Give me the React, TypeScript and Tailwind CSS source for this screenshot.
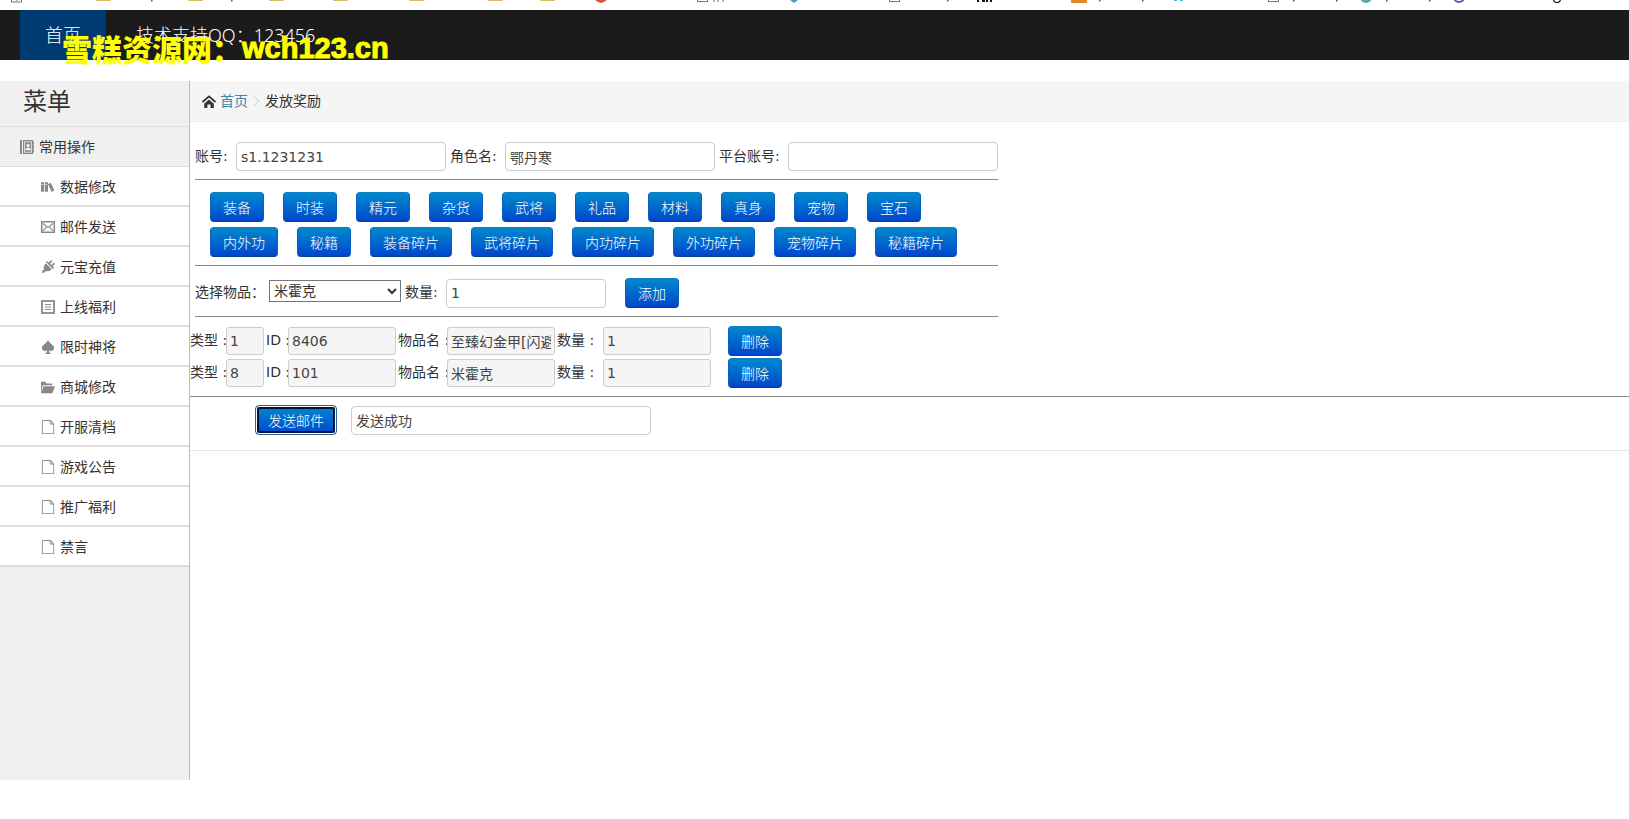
import React from "react";
import { ImBooks, ImPowerCord, ImSpades, ImFolderOpen, ImFileEmpty } from "react-icons/im";

const sans = "font-['DejaVu_Sans','Noto_Sans_CJK_SC',sans-serif]";

function MailIcon() {
  return (
    <svg viewBox="0 0 14 12" width="14" height="12" fill="none" stroke="currentColor" aria-hidden="true">
      <rect x="0.75" y="0.75" width="12.5" height="10.5" strokeWidth="1.5" />
      <path d="M2 2.5l5 4 5-4M2 9.8l3.2-3.6M12 9.8L8.8 6.2" strokeWidth="1.1" />
    </svg>
  );
}

function ListIcon() {
  return (
    <svg viewBox="0 0 14 14" width="14" height="14" fill="none" stroke="currentColor" aria-hidden="true">
      <rect x="1" y="1" width="12" height="12" strokeWidth="1.8" />
      <path d="M4 4.5h6M4 7h6M4 9.5h6" strokeWidth="1.1" />
    </svg>
  );
}

function ContactsIcon() {
  return (
    <svg viewBox="0 0 14 14" width="14" height="14" aria-hidden="true">
      <path d="M0 0h2v14H0zM3 0h10v14H3z" fill="#888" />
      <path d="M13 1.5h1v3h-1zM13 5.5h1v3h-1zM13 9.5h1v3h-1z" fill="#888" />
      <rect x="4.6" y="1.8" width="7" height="10.4" fill="none" stroke="#eee" strokeWidth="0.8" />
      <circle cx="8.1" cy="5.4" r="1.7" fill="#f0f0f0" />
      <path d="M5.3 10.3c0-2 1.2-2.9 2.8-2.9s2.8.9 2.8 2.9z" fill="#f0f0f0" />
    </svg>
  );
}

function HomeIcon() {
  return (
    <svg viewBox="0 0 14 13" width="14" height="13" className="mr-1" aria-hidden="true">
      <path d="M0.5 7L7 1.4 13.5 7" fill="none" stroke="#333" strokeWidth="1.9" />
      <path d="M7 4.6l4.8 4.2V13H8.6V9.6H5.4V13H2.2V8.8z" fill="#333" />
    </svg>
  );
}

const menu: { label: string; icon: React.ReactNode }[] = [
  { label: "数据修改", icon: <ImBooks /> },
  { label: "邮件发送", icon: <MailIcon /> },
  { label: "元宝充值", icon: <ImPowerCord /> },
  { label: "上线福利", icon: <ListIcon /> },
  { label: "限时神将", icon: <ImSpades /> },
  { label: "商城修改", icon: <ImFolderOpen /> },
  { label: "开服清档", icon: <ImFileEmpty /> },
  { label: "游戏公告", icon: <ImFileEmpty /> },
  { label: "推广福利", icon: <ImFileEmpty /> },
  { label: "禁言", icon: <ImFileEmpty /> },
];

const categories = [
  ["装备", "时装", "精元", "杂货", "武将", "礼品", "材料", "真身", "宠物", "宝石"],
  ["内外功", "秘籍", "装备碎片", "武将碎片", "内功碎片", "外功碎片", "宠物碎片", "秘籍碎片"],
];

const rows = [
  { type: "1", id: "8406", name: "至臻幻金甲[闪避]", count: "1" },
  { type: "8", id: "101", name: "米霍克", count: "1" },
];

function Button({ children, className = "" }: { children: React.ReactNode; className?: string }) {
  return (
    <button
      type="button"
      className={`h-[30px] shrink-0 rounded border border-t-[#0a7cc4] border-x-[#0a5fc0] border-b-[#0b3f9c] bg-linear-to-b from-[#0088cc] to-[#0044cc] px-3 pt-0.5 text-sm font-light text-white ${className}`}
    >
      {children}
    </button>
  );
}

const label = "shrink-0 whitespace-nowrap pb-0.5";
const box = "h-[29px] min-w-0 rounded border border-[#ccc] bg-white px-1 text-sm text-[#444] outline-none";
const flat = "h-[28px] min-w-0 rounded-[3px] border border-[#ccc] bg-[#f5f5f5] px-[3px] text-sm text-[#444] outline-none";

function BookmarkStrip() {
  const folders = [96, 188, 269, 333, 409, 488, 540];
  const marks = [151, 231, 947, 1099, 1142, 1293, 1336, 1386, 1429];
  const pages = [11, 697, 889, 1268];
  return (
    <svg className="block h-[10px] w-full" viewBox="0 0 1629 10" preserveAspectRatio="xMinYMin slice" aria-hidden="true">
      {folders.map((x) => (
        <rect key={x} x={x} y="-4" width="15" height="5" rx="1" fill="#dcb964" />
      ))}
      {marks.map((x) => (
        <rect key={x} x={x} y="0" width="1.5" height="1.5" fill="#555" />
      ))}
      {pages.map((x) => (
        <rect key={x} x={x + 0.5} y="-8" width="10" height={x === 11 ? 10 : 9.5} fill="none" stroke="#777" />
      ))}
      <path d="M16 0h2M714 0v2M718 0v2M723 0v2" stroke="#666" />
      <path d="M595 0h12l-3 2-3 1-3-1z" fill="#d8553c" />
      <path d="M790 0h8l-4 3z" fill="#4a9fc8" />
      <path d="M978 0v2M982 1h3M987 0v2M990 1h2" stroke="#111" strokeWidth="2" />
      <rect x="1071" y="-3" width="16" height="6" fill="#e08a2c" />
      <path d="M1174 0h3v1h-3zM1180 0h3v1h-3z" fill="#55b5d5" />
      <circle cx="1366" cy="-3" r="6" fill="#5aa8a8" />
      <circle cx="1459" cy="-3" r="5" fill="none" stroke="#6a50b8" strokeWidth="2" />
      <circle cx="1557" cy="-1" r="3.5" fill="none" stroke="#222" strokeWidth="1.2" />
    </svg>
  );
}

export default function App() {
  return (
    <div className={`relative min-h-screen bg-white text-sm text-[#333] ${sans}`}>
      <BookmarkStrip />
      <nav className="flex h-[50px] items-stretch bg-[#1b1b1b] pl-5 font-['Noto_Sans','Noto_Sans_CJK_SC',sans-serif] text-lg font-light text-white">
        <a href="#home" className="flex items-center bg-[#003a72] px-[25px]">首页</a>
        <a href="#support" className="flex items-center px-[30px]">技术支持QQ：123456</a>
      </nav>
      <div className="absolute top-[30px] left-[62px] flex items-center text-[30px] leading-[36px] font-black whitespace-nowrap text-[#ffff00] font-['Noto_Sans_CJK_SC',sans-serif]">
        <span>雪糕资源网：</span>
        <span className="font-['Liberation_Sans',sans-serif] text-[29px] [-webkit-text-stroke:1px_#ffff00]">wch123.cn</span>
      </div>

      <div className="mt-[21px] flex items-start">
        <aside className="min-h-[699px] w-[190px] shrink-0 border-r border-[#bbb] bg-[#f0f0f0]">
          <h2 className="flex h-[45px] items-center pb-1 pl-[23px] text-2xl">菜单</h2>
          <a href="#common" className="flex h-10 items-center gap-[5px] border-t border-[#ddd] pl-5">
            <ContactsIcon />
            常用操作
          </a>
          <ul className="border-t border-[#ddd]">
            {menu.map((m) => (
              <li key={m.label} className="border-b-2 border-[#ddd] bg-white">
                <a href="#item" className="flex h-[38px] items-center gap-[5px] pt-0.5 pl-[41px]">
                  <span className="flex w-[14px] justify-center text-[#888]">{m.icon}</span>
                  {m.label}
                </a>
              </li>
            ))}
          </ul>
        </aside>

        <main className="min-w-0 flex-1">
          <div className="flex h-[41px] items-center border-b border-[#eee] bg-[#f5f5f5] pl-3">
            <HomeIcon />
            <a href="#home" className="text-[#3a87ad]">首页</a>
            <svg width="17" height="12" viewBox="0 0 17 12" fill="none" stroke="#ccc" aria-hidden="true">
              <path d="M6 1.5l5 4.5-5 4.5" />
            </svg>
            <span>发放奖励</span>
          </div>

          <div className="w-[808px] pt-5 pl-[5px]">
            <div className="flex items-center">
              <label htmlFor="acct" className={`${label} w-[41px]`}>账号:</label>
              <input id="acct" className={`${box} w-[210px]`} defaultValue="s1.1231231" />
              <label htmlFor="role" className={`${label} w-[59px] pl-1`}>角色名:</label>
              <input id="role" className={`${box} w-[210px]`} defaultValue="鄂丹寒" />
              <label htmlFor="plat" className={`${label} w-[73px] pl-1`}>平台账号:</label>
              <input id="plat" className={`${box} w-[210px]`} />
            </div>
            <hr className="mt-2 border-[#888]" />
            <div className="flex flex-col gap-[5px] pt-3 pb-2 pl-[15px]">
              {categories.map((line, i) => (
                <div key={i} className="flex gap-[19px]">
                  {line.map((c) => (
                    <Button key={c}>{c}</Button>
                  ))}
                </div>
              ))}
            </div>
            <hr className="border-[#888]" />
            <div className="flex items-center pt-3 pb-2">
              <label htmlFor="goods" className={`${label} w-[74px]`}>选择物品：</label>
              <div className="h-[26px]">
                <select id="goods" className="block h-[22px] w-[132px] border border-[#767676] bg-white text-sm text-[#333]">
                  <option>米霍克</option>
                </select>
              </div>
              <label htmlFor="num" className={`${label} w-[45px] pl-1`}>数量:</label>
              <input id="num" className={`${box} mr-[19px] w-[160px]`} defaultValue="1" />
              <Button>添加</Button>
            </div>
            <hr className="border-[#888]" />
          </div>

          <div className="flex flex-col gap-[2px] pt-[9px]">
            {rows.map((r, i) => (
              <div key={r.id} className="flex items-center">
                <label htmlFor={`t${i}`} className={`${label} w-[36px]`}>类型 :</label>
                <input id={`t${i}`} readOnly className={`${flat} w-[38px]`} defaultValue={r.type} />
                <label htmlFor={`i${i}`} className={`${label} w-[24px] pl-[2px]`}>ID :</label>
                <input id={`i${i}`} readOnly className={`${flat} w-[108px]`} defaultValue={r.id} />
                <label htmlFor={`n${i}`} className={`${label} w-[51px] pl-[2px]`}>物品名 :</label>
                <input id={`n${i}`} readOnly className={`${flat} w-[108px]`} defaultValue={r.name} />
                <label htmlFor={`c${i}`} className={`${label} w-[48px] pl-[2px]`}>数量 :</label>
                <input id={`c${i}`} readOnly className={`${flat} mr-[17px] w-[108px]`} defaultValue={r.count} />
                <Button>删除</Button>
              </div>
            ))}
          </div>
          <hr className="mt-2 border-[#888]" />
          <div className="flex items-center border-b border-[#e5e5e5] pt-2 pb-[15px] pl-[65px]">
            <Button className="mr-[14px] border-[#2f6596]! shadow-[inset_0_0_0_1px_#ffffff,inset_0_0_0_3px_#001338]">发送邮件</Button>
            <input aria-label="发送结果" className={`${box} w-[300px]`} defaultValue="发送成功" />
          </div>
        </main>
      </div>
    </div>
  );
}
